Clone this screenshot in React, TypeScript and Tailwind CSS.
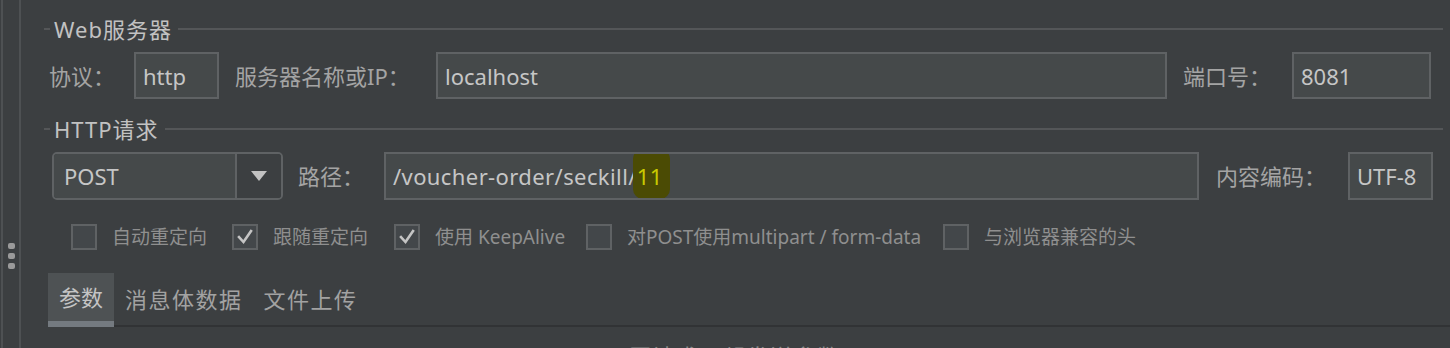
import React from 'react';

const font = { fontFamily: '"Noto Sans", "Noto Sans CJK SC", sans-serif' };

function Legend({ title }: { title: string }) {
  return (
    <div className="shrink-0 flex items-center h-[24px] ml-[24px] mr-[7px]">
      <div className="w-[6px] h-[2px] bg-[#545658]" />
      <span className="ml-[4px] mr-[6px] text-[22px] leading-none text-[#c2c2c2] tracking-[1px]">{title}</span>
      <div className="flex-1 h-[2px] bg-[#545658]" />
    </div>
  );
}

function Label({ text, className }: { text: string; className: string }) {
  return (
    <div className={`shrink-0 text-[22px] leading-none text-[#a4a4a4] whitespace-nowrap ${className}`}>{text}</div>
  );
}

function Field({ className, children }: { className: string; children: React.ReactNode }) {
  return (
    <div
      className={`shrink-0 flex items-center h-full bg-[#45494a] border-2 border-[#5f6264] pl-[7px] text-[22px] leading-none text-[#c6c6c6] whitespace-nowrap overflow-hidden ${className}`}
    >
      {children}
    </div>
  );
}

function Check({ label, checked, className }: { label: string; checked?: boolean; className: string }) {
  return (
    <div className={`shrink-0 flex items-center gap-[15px] ${className}`}>
      <div className="w-[26px] h-[26px] border-2 border-[#5f6264] bg-[#43474a] flex items-center justify-center">
        {checked && (
          <svg width="18" height="18" viewBox="0 0 18 18">
            <polyline points="3,9 7.5,14 15,3" fill="none" stroke="#c4c4c4" strokeWidth="2.6" strokeLinecap="square" />
          </svg>
        )}
      </div>
      <span className="text-[19px] leading-none text-[#8f8f8f] whitespace-nowrap">{label}</span>
    </div>
  );
}

export default function App() {
  return (
    <div className="w-[1450px] h-[348px] overflow-hidden bg-[#3c3f41] flex" style={font}>
      {/* left splitter strip */}
      <div className="w-[20px] shrink-0 ml-[1px] border-l-2 border-r-2 border-[#4e5153] flex flex-col items-center justify-start pt-[243px] gap-[4px]">
        <div className="w-[7px] h-[6px] rounded-[2px] bg-[#9a9a9a]" />
        <div className="w-[7px] h-[6px] rounded-[2px] bg-[#9a9a9a]" />
        <div className="w-[7px] h-[6px] rounded-[2px] bg-[#9a9a9a]" />
      </div>

      <div className="flex-1 flex flex-col pt-[17px] -ml-[1px]">
        <Legend title="Web服务器" />

        {/* server row */}
        <div className="shrink-0 flex items-center h-[47px] mt-[11px] pl-[29px]">
          <Label text="协议：" className="w-[85px]" />
          <Field className="w-[85px]">http</Field>
          <Label text="服务器名称或IP：" className="ml-[16px] w-[201px]" />
          <Field className="w-[731px]">localhost</Field>
          <Label text="端口号：" className="ml-[16px] w-[109px]" />
          <Field className="w-[139px]">8081</Field>
        </div>

        <div className="shrink-0 mt-[18px]">
          <Legend title="HTTP请求" />
        </div>

        {/* request row */}
        <div className="shrink-0 flex items-center h-[48px] mt-[11px] pl-[32px]">
          <div className="shrink-0 w-[231px] h-full flex border-2 border-[#5f6264] rounded-[5px] overflow-hidden">
            <div className="flex-1 flex items-center bg-[#45494a] pl-[10px] text-[22px] leading-none text-[#c6c6c6]">POST</div>
            <div className="w-[46px] border-l-2 border-[#5f6264] flex items-center justify-center bg-[#3c3f41]">
              <svg width="16" height="10" viewBox="0 0 16 10">
                <polygon points="0,0 16,0 8,10" fill="#c2c2c2" />
              </svg>
            </div>
          </div>
          <Label text="路径：" className="ml-[15px] w-[86px]" />
          <Field className="w-[815px] tracking-[0.4px]">
            <span>/voucher-order/seckill/</span>
            <span className="relative">
              <span className="absolute -left-[4px] -right-[7px] -top-[16px] -bottom-[12px] bg-[#4b4b04] rounded-[10px]" />
              <span className="relative text-[#caca00]">11</span>
            </span>
          </Field>
          <Label text="内容编码：" className="ml-[17px] w-[132px]" />
          <Field className="w-[85px]">UTF-8</Field>
        </div>

        {/* options */}
        <div className="shrink-0 flex items-center h-[26px] mt-[24px] pl-[51px]">
          <Check label="自动重定向" className="w-[161px]" />
          <Check label="跟随重定向" checked className="w-[162px]" />
          <Check label="使用 KeepAlive" checked className="w-[192px]" />
          <Check label="对POST使用multipart / form-data" className="w-[357px]" />
          <Check label="与浏览器兼容的头" className="w-[200px]" />
        </div>

        {/* tabs */}
        <div className="shrink-0 flex items-end mt-[23px] ml-[28px] h-[54px] border-b-2 border-[#313335]">
          <div className="h-[54px] -mb-[2px] bg-[#4e5254] border-b-[6px] border-[#747a80] px-[11px] flex items-center text-[22px] leading-none text-[#c4c4c4]">
            参数
          </div>
          <div className="h-[52px] px-[11px] flex items-center text-[22px] leading-none tracking-[1.5px] text-[#a2a2a2]">
            消息体数据
          </div>
          <div className="h-[52px] px-[10px] flex items-center text-[22px] leading-none tracking-[1.5px] text-[#a2a2a2]">
            文件上传
          </div>
        </div>

        <div className="shrink-0 mt-[18px] text-center text-[22px] leading-none tracking-[1.5px] text-[#8a8a8a]">
          同请求一起发送参数
        </div>
      </div>
    </div>
  );
}
